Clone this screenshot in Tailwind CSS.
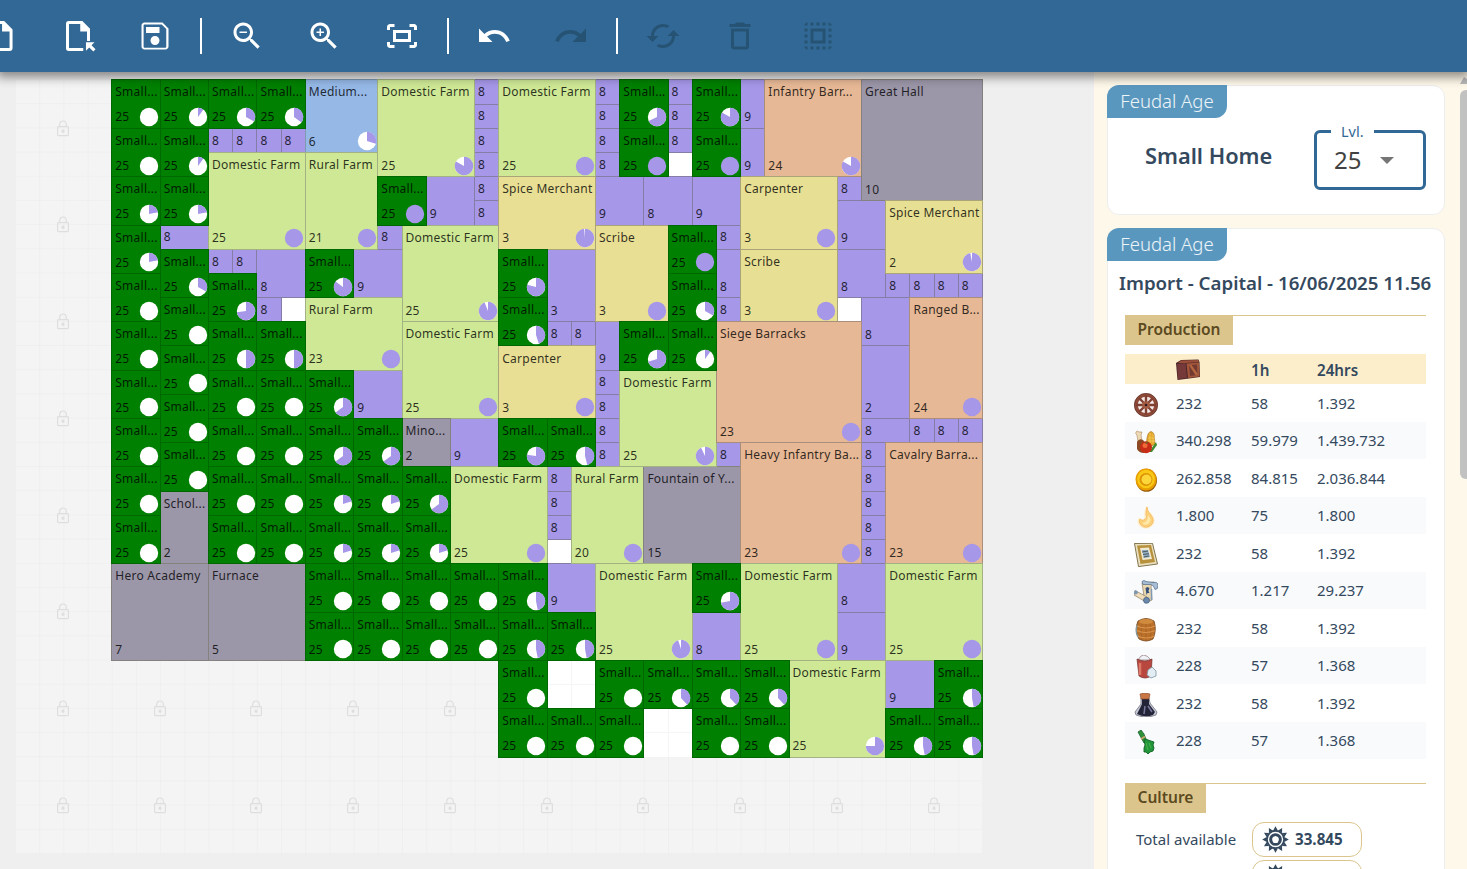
<!DOCTYPE html>
<html lang="en">
<head>
<meta charset="utf-8">
<title>City planner</title>
<script src="https://cdn.jsdelivr.net/npm/@tailwindcss/browser@4"></script>
</head>
<body class="h-[869px] w-[1467px] overflow-hidden bg-[#efefef] font-['Noto_Sans',sans-serif]">
<div class="flex h-[869px] flex-col overflow-hidden">
  <header class="relative z-10 flex h-[72px] shrink-0 items-center bg-[#326895] text-white shadow-[0_2px_10px_3px_rgba(0,0,0,0.45)]">
    <div class="-ml-[37.5px] flex items-center">
      <button class="flex w-[77px] justify-center"><svg class="size-9" viewBox="0 0 24 24"><path d="M5 3h10l5 5v12q0 1-1 1H5q-1 0-1-1V4q0-1 1-1Z" fill="none" stroke="currentColor" stroke-width="2" transform="translate(-1.300 0)"/><path d="M12.700 2.200h1l5.600 5.600V9h-6.600z" fill="currentColor"/></svg></button>
      <button class="flex w-[77px] justify-center"><svg class="size-9 overflow-visible" viewBox="0 0 24 24"><path d="M15.500 21H5.800q-.8 0-.8-.8V3.800Q5 3 5.800 3h8.700L19 7.500V15.300" fill="none" stroke="currentColor" stroke-width="2"/><path d="M13.500 2.300 19.800 8.600V9h-6.300zM17.300 16.200h5.700l-2 2 2.700 2.700-1.500 1.500-2.700-2.700-2.200 2.200z" fill="currentColor"/></svg></button>
      <button class="flex w-[77px] justify-center"><svg class="size-9" viewBox="0 0 24 24" fill="currentColor"><path fill-rule="evenodd" d="M17 3H5c-1.110 0-2 .9-2 2v14c0 1.100.89 2 2 2h14c1.100 0 2-.9 2-2V7l-4-4zm2.500 16.200a.6.600 0 0 1-.6.600H5a.6.600 0 0 1-.6-.6V4.900c0-.3.300-.6.600-.6h11.500l3 3v11.900zM12 12c-1.660 0-3 1.340-3 3s1.340 3 3 3 3-1.340 3-3-1.340-3-3-3zM6 6h9v4H6z"/></svg></button>
      <div class="flex w-[15px] justify-center"><i class="h-9 w-0.5 bg-white"></i></div>
      <button class="flex w-[77px] justify-center"><svg class="size-9" viewBox="0 0 24 24" fill="currentColor"><path d="M15.500 14h-.79l-.28-.27C15.410 12.590 16 11.110 16 9.500 16 5.910 13.090 3 9.500 3S3 5.910 3 9.500 5.910 16 9.500 16c1.610 0 3.090-.59 4.230-1.570l.27.28v.79l5 4.990L20.490 19l-4.990-5zm-6 0C7.010 14 5 11.990 5 9.500S7.010 5 9.500 5 14 7.010 14 9.500 11.990 14 9.500 14zM7 9h5v1H7z"/></svg></button>
      <button class="flex w-[77px] justify-center"><svg class="size-9" viewBox="0 0 24 24" fill="currentColor"><path d="M15.500 14h-.79l-.28-.27C15.410 12.590 16 11.110 16 9.500 16 5.910 13.090 3 9.500 3S3 5.910 3 9.500 5.910 16 9.500 16c1.610 0 3.090-.59 4.230-1.570l.27.28v.79l5 4.990L20.490 19l-4.990-5zm-6 0C7.010 14 5 11.990 5 9.500S7.010 5 9.500 5 14 7.010 14 9.500 11.990 14 9.500 14zM12 10h-2v2H9v-2H7V9h2V7h1v2h2v1z"/></svg></button>
      <button class="flex w-[77px] justify-center pl-0.5"><svg class="size-9" viewBox="0 0 24 24" fill="currentColor"><path d="M17 4h3c1.100 0 2 .9 2 2v2h-2V6h-3V4zM4 8V6h3V4H4c-1.100 0-2 .9-2 2v2h2zm16 8v2h-3v2h3c1.100 0 2-.9 2-2v-2h-2zM7 18H4v-2H2v2c0 1.100.9 2 2 2h3v-2zM16 10v4H8v-4h8m2-2H6v8h12V8z"/></svg></button>
      <div class="ml-px flex w-[15px] justify-center"><i class="h-9 w-0.5 bg-white"></i></div>
      <button class="flex w-[77px] justify-center"><svg class="size-9" viewBox="0 0 24 24" fill="currentColor"><path d="M12.500 8c-2.650 0-5.050.99-6.900 2.600L2 7v9h9l-3.620-3.620c1.390-1.160 3.160-1.880 5.120-1.880 3.540 0 6.550 2.310 7.600 5.500l2.370-.78C21.080 11.030 17.150 8 12.500 8z"/></svg></button>
      <button class="flex w-[77px] justify-center text-[#265373]"><svg class="size-9" viewBox="0 0 24 24" fill="currentColor"><path d="M18.400 10.600C16.550 8.990 14.150 8 11.500 8c-4.650 0-8.580 3.030-9.960 7.220L3.900 16c1.050-3.190 4.050-5.500 7.600-5.500 1.950 0 3.730.72 5.120 1.880L13 16h9V7l-3.600 3.600z"/></svg></button>
      <div class="flex w-[15px] justify-center"><i class="h-9 w-0.5 bg-white"></i></div>
      <button class="flex w-[77px] justify-center text-[#265373]"><svg class="size-9" viewBox="0 0 24 24" fill="currentColor"><path d="m19 8-4 4h3c0 3.310-2.690 6-6 6-1.010 0-1.970-.25-2.800-.7l-1.460 1.460C8.970 19.540 10.430 20 12 20c4.420 0 8-3.580 8-8h3l-4-4zM6 12c0-3.310 2.690-6 6-6 1.010 0 1.970.25 2.800.7l1.460-1.460C15.030 4.460 13.570 4 12 4c-4.420 0-8 3.580-8 8H1l4 4 4-4H6z"/></svg></button>
      <button class="flex w-[77px] justify-center text-[#265373]"><svg class="size-9" viewBox="0 0 24 24" fill="currentColor"><path d="M6 19c0 1.100.9 2 2 2h8c1.100 0 2-.9 2-2V7H6v12zM8 9h8v10H8V9zm7.500-5-1-1h-5l-1 1H5v2h14V4z"/></svg></button>
      <button class="flex w-[77px] justify-center pl-0.5 text-[#265373]"><svg class="size-9" viewBox="0 0 24 24" fill="currentColor"><path d="M3 5h2V3c-1.100 0-2 .9-2 2zm0 8h2v-2H3v2zm4 8h2v-2H7v2zM3 9h2V7H3v2zm10-6h-2v2h2V3zm6 0v2h2c0-1.100-.9-2-2-2zM5 21v-2H3c0 1.100.9 2 2 2zm-2-4h2v-2H3v2zM9 3H7v2h2V3zm2 18h2v-2h-2v2zm8-8h2v-2h-2v2zm0 8c1.100 0 2-.9 2-2h-2v2zm0-12h2V7h-2v2zm0 8h2v-2h-2v2zm-4 4h2v-2h-2v2zm0-16h2V3h-2v2zM7 17h10V7H7v10zm2-8h6v6H9V9z"/></svg></button>
    </div>
  </header>

  <div class="flex min-h-0 flex-1">
    <main class="w-[1094px] shrink-0 overflow-hidden pt-[7.400px] pl-[14.500px]">
      <div id="map" class="grid h-[774.200px] w-[967.600px] grid-cols-[repeat(40,24.190px)] grid-rows-[repeat(32,24.190px)] bg-[#f4f4f4] text-[12px] leading-[24px] text-black/80"></div>
    </main>

    <aside class="flex flex-1 overflow-hidden bg-[#fef8ea] pl-[13px]">
      <div class="flex w-[338px] flex-col gap-[13px] pt-[13px]">
        <section class="h-[130px] shrink-0 rounded-xl border border-[#eeeeee] bg-white">
          <div class="-mt-px -ml-px h-[33px] w-[120px] rounded-tl-xl rounded-br-xl bg-[#5a97be] text-center text-[18.500px] leading-[32px] font-light text-white/90">Feudal Age</div>
          <div class="flex items-center pl-[37px]">
            <h2 class="mt-[4px] w-[169px] text-[21.800px] font-semibold whitespace-nowrap text-[#34495e]">Small Home</h2>
            <fieldset class="mt-[5px] h-[67px] w-[112px] rounded-md border-3 border-[#326895] pl-[17px]">
              <legend class="-ml-[3px] px-2.5 text-[14.500px] leading-[16px] text-[#326895]">Lvl.</legend>
              <div class="flex items-center gap-[19px] pt-[6px] text-[24px] leading-[30px] text-[#424242]">25<i class="mt-px border-x-[7.500px] border-t-[7.500px] border-x-transparent border-t-[#757575]"></i></div>
            </fieldset>
          </div>
        </section>

        <section class="h-[700px] shrink-0 rounded-xl border border-[#eeeeee] bg-white text-[#34495e]">
          <div class="-mt-px -ml-px h-[33px] w-[120px] rounded-tl-xl rounded-br-xl bg-[#5a97be] text-center text-[18.500px] leading-[32px] font-light text-white/90">Feudal Age</div>
          <h2 class="mt-[8px] pl-[11px] text-[18.720px] leading-[28px] font-semibold whitespace-nowrap">Import - Capital - 16/06/2025 11.56</h2>
          <div class="mt-[18px] ml-[17px] w-[301px]">
            <div class="border-t border-[#dbc58d]"><h3 class="-mt-px flex h-[30px] w-[108px] items-center justify-center bg-[#dbc58d] text-[15.500px] font-semibold text-[#5c4a1f]">Production</h3></div>
            <div class="mt-[9px] grid h-[30px] grid-cols-[51px_75px_66px_1fr] items-center bg-[#fdeecb] text-[15.200px] leading-[32px] font-semibold">
              <span></span>
              <svg class="size-6" viewBox="0 0 24 24"><path d="M0 5 5 2l17.500-.5L23.500 4l.5 15-11 1.500L1.500 22z" fill="#4b2528"/><path d="M1 6 9.500 5l1.500 15-9 1z" fill="#75393a"/><path d="M2 5l3-2.500 17-.5 1 2-13 1z" fill="#9a4f3a"/><path d="M10.500 5.500 23 4.500l.5 14-11.500 1.500z" fill="#a2563a"/><path d="M13 7.300l8-.8.500 10.500-7.500 1z" fill="#733a32"/><path d="m13 7.300 2.500-.2 6 8.300v1.600l-1.800.3z" fill="#b5683f"/></svg>
              <span>1h</span><span>24hrs</span>
            </div>
            <div id="rows" class="text-[15px] leading-[37.500px]"></div>
            <div class="mt-[24px] border-t border-[#dbc58d]"><h3 class="-mt-px flex h-[30px] w-[81px] items-center justify-center bg-[#dbc58d] text-[15.500px] font-semibold text-[#5c4a1f]">Culture</h3></div>
            <div class="mt-[9px] grid grid-cols-[127px_110px] items-center gap-y-[3px] text-[15px]">
              <span class="pl-[11px] leading-[33px]">Total available</span>
              <div class="flex h-[35px] items-center gap-[6px] rounded-xl border border-[#dbc58d] pl-[9px] text-[15.200px] leading-[33px] font-bold"><svg class="gear size-[27px]" viewBox="-14 -14 28 28"></svg>33.845</div>
              <span></span>
              <div class="flex h-[35px] items-center gap-[6px] rounded-xl border border-[#dbc58d] pl-[9px]"><svg class="gear size-[27px]" viewBox="-14 -14 28 28"></svg></div>
            </div>
          </div>
        </section>
      </div>
      <div class="ml-auto flex w-[7px] flex-col pt-[4px]">
        <svg class="h-2 w-[7px]" viewBox="0 0 7 8"><path d="M0 8 4 1l3 2v5z" fill="#b9b9b9"/></svg>
        <div class="mt-[6px] h-[389px] rounded-l-md bg-[#c1c1c1]"></div>
      </div>
    </aside>
  </div>
</div>

<script>
const map = document.getElementById('map');
const LINE = 'rgba(0,0,0,0.02)';
map.style.backgroundImage = `linear-gradient(to right, ${LINE} 1px, transparent 1px), linear-gradient(to bottom, ${LINE} 1px, transparent 1px)`;
map.style.backgroundSize = '24.19px 24.19px';

// Each cell is placed with its grid column, row, width and height.
function cell(x, y, w, h, cls, html) {
  const d = document.createElement('div');
  d.className = cls;
  d.style.gridArea = `${y + 1} / ${x + 5} / span ${h} / span ${w}`;
  d.innerHTML = html || '';
  map.appendChild(d);
}

const LOCK = '<svg class="mt-[0.500px] h-[17px] w-[14px] text-[#dedede]" viewBox="0 0 14 17" fill="none" stroke="currentColor" stroke-width="1.200"><rect x="1.600" y="6.600" width="10.800" height="9" rx=".8"/><path d="M3.700 6.500V4.300a3.300 3.300 0 0 1 6.600 0v2.200"/><circle cx="7" cy="11.200" r="1" fill="currentColor"/></svg>';
const locks = [];
for (let i = 0; i < 8; i++) locks.push([-4, i * 4]);
for (let i = 0; i < 4; i++) locks.push([i * 4, 24]);
for (let i = 0; i < 9; i++) locks.push([i * 4, 28]);
for (const [x, y] of locks) cell(x, y, 4, 4, 'flex items-center justify-center', LOCK);

// Free, unlocked tiles
for (const [x, y, s] of [[7,9,1],[23,3,1],[30,9,1],[18,19,1],[18,24,2],[22,26,2]])
  for (let i = 0; i < s; i++) for (let j = 0; j < s; j++)
    cell(x + i, y + j, 1, 1, 'border-t border-l border-[#f5f5f5] bg-white');

function pie(p) {
  let slice = '';
  if (p > 0 && p < 1) {
    const a = p * 2 * Math.PI;
    slice = `<path fill="#a697e8" d="M0 0V-9.200A9.200 9.200 0 ${p > .5 ? 1 : 0} 1 ${(9.2 * Math.sin(a)).toFixed(2)} ${(-9.2 * Math.cos(a)).toFixed(2)}Z"/>`;
  }
  return `<svg class="mr-[0.500px] mb-[0.500px] size-5 shrink-0" viewBox="-10 -10 20 20"><circle r="9.200" fill="${p >= 1 ? '#a697e8' : '#fff'}"/>${slice}</svg>`;
}

const BASE = '-mr-px -mb-px flex flex-col justify-between overflow-hidden border pl-[3px] whitespace-nowrap ';
const STYLES = {
  home: BASE + 'border-[#006800] bg-[#008000]',
  culture: BASE + 'border-[#857da5] bg-[#a697e8]',
  farm: BASE + 'border-[#a2b283] bg-[#cee895]',
  work: BASE + 'border-[#aaa578] bg-[#e7df93]',
  spice: BASE + 'border-[#aaa578] bg-[#e8de94]',
  army: BASE + 'border-[#a98f7b] bg-[#e7b895]',
  grey: BASE + 'border-[#85817f] bg-[#9b96a8]',
  blue: BASE + 'border-[#7f99b3] bg-[#95b8e7]'
};

function building(type, x, y, w, h, level, name, p) {
  const label = name ? `<span class="h-6 pt-[0.100px] tracking-[0.250px]">${name}</span>` : '<span></span>';
  const foot = `<div class="-mb-[1.700px] flex h-6 items-center justify-between"><span class="tracking-[0.200px]">${level}</span>${p === undefined ? '' : pie(p)}</div>`;
  cell(x, y, w, h, STYLES[type], h === 1 ? `<span class="-mt-[0.200px] tracking-[0.200px]">${level}</span>` : label + foot);
}

// Culture sites: column, row, width, height, level
[[2,6,2,1,8],[4,2,1,1,8],[5,2,1,1,8],[6,2,1,1,8],[7,2,1,1,8],[4,7,1,1,8],[5,7,1,1,8],[6,7,2,2,8],[6,9,1,1,8],
[10,7,2,2,9],[10,12,2,2,9],[13,4,2,2,9],[15,0,1,1,8],[15,1,1,1,8],[15,2,1,1,8],[15,3,1,1,8],[15,4,1,1,8],[15,5,1,1,8],
[11,6,1,1,8],[14,14,2,2,9],[18,7,2,3,3],[18,10,1,1,8],[19,10,1,1,8],[18,16,1,1,8],[18,17,1,1,8],[18,18,1,1,8],
[20,0,1,1,8],[20,1,1,1,8],[20,2,1,1,8],[20,3,1,1,8],[20,4,2,2,9],[22,4,2,2,8],[24,4,2,2,9],[20,10,1,2,9],
[20,12,1,1,8],[20,13,1,1,8],[20,14,1,1,8],[20,15,1,1,8],[23,0,1,1,8],[23,1,1,1,8],[23,2,1,1,8],[26,0,1,2,9],[26,2,1,2,9],
[25,6,1,1,8],[25,7,1,2,8],[25,9,1,1,8],[30,4,1,1,8],[30,5,2,2,9],[30,7,2,2,8],[32,8,1,1,8],[33,8,1,1,8],[34,8,1,1,8],[35,8,1,1,8],
[31,9,2,2,8],[31,11,2,3,2],[31,14,2,1,8],[33,14,1,1,8],[34,14,1,1,8],[35,14,1,1,8],[25,15,1,1,8],
[31,15,1,1,8],[31,16,1,1,8],[31,17,1,1,8],[31,18,1,1,8],[31,19,1,1,8],
[18,20,2,2,9],[24,22,2,2,8],[30,20,2,2,8],[30,22,2,2,9],[32,24,2,2,9]
].forEach(c => building('culture', ...c));

[['blue',8,0,3,3,6,'Medium...',.3],
['farm',4,3,4,4,25,'Domestic Farm',1],['farm',8,3,3,4,21,'Rural Farm',1],['farm',8,9,4,3,23,'Rural Farm',1],
['farm',11,0,4,4,25,'Domestic Farm',.83],['farm',12,6,4,4,25,'Domestic Farm',.94],['farm',12,10,4,4,25,'Domestic Farm',1],
['grey',12,14,2,2,2,'Mino...'],['farm',14,16,4,4,25,'Domestic Farm',1],['farm',16,0,4,4,25,'Domestic Farm',1],
['spice',16,4,4,3,3,'Spice Merchant',.985],['spice',16,11,4,3,3,'Carpenter',1],['farm',19,16,3,4,20,'Rural Farm',1],
['grey',22,16,4,4,15,'Fountain of Y...'],['spice',20,6,3,4,3,'Scribe',1],['army',27,0,4,4,24,'Infantry Barr...',.83],
['grey',31,0,5,5,10,'Great Hall'],['work',26,4,4,3,3,'Carpenter',1],['work',26,7,4,3,3,'Scribe',1],
['work',32,5,4,3,2,'Spice Merchant',.97],['army',33,9,3,5,24,'Ranged B...',1],['farm',21,12,4,4,25,'Domestic Farm',.93],
['army',25,10,6,5,23,'Siege Barracks',1],['army',26,15,5,5,23,'Heavy Infantry Ba...',1],['army',32,15,4,5,23,'Cavalry Barra...',1],
['grey',2,17,2,3,2,'Schol...'],['grey',0,20,4,4,7,'Hero Academy'],['grey',4,20,4,4,5,'Furnace'],
['farm',20,20,4,4,25,'Domestic Farm',.95],['farm',26,20,4,4,25,'Domestic Farm',1],['farm',32,20,4,4,25,'Domestic Farm',1],
['farm',28,24,4,4,25,'Domestic Farm',.75]
].forEach(b => building(...b));

// Small homes: column, row, filled share of the indicator
[[0,0,0],[0,2,0],[0,4,.22],[0,6,.22],[0,8,0],[0,10,0],[0,12,0],[0,14,0],[0,16,0],[0,18,0],
[2,0,.1],[2,2,.1],[2,4,.22],[2,7,.33],[2,9,0],[2,11,0],[2,13,0],[2,15,0],
[4,0,.33],[6,0,.35],[4,8,.73],[4,10,.5],[6,10,.5],[4,12,0],[6,12,0],[4,14,0],[6,14,0],[4,16,0],[6,16,0],[4,18,0],[6,18,0],
[8,7,.85],[8,12,.65],[8,14,.65],[10,14,.65],[8,16,.2],[10,16,.2],[12,16,.65],[8,18,.2],[10,18,.2],[12,18,.2],
[11,4,1],[16,7,.79],[16,9,.45],[16,14,.77],[18,14,.46],[21,0,.68],[21,2,1],[24,0,.83],[24,2,1],[23,6,1],[23,8,.33],[21,10,.7],[23,10,.1],
[8,20,0],[10,20,0],[12,20,0],[14,20,0],[16,20,.47],[8,22,0],[10,22,0],[12,22,0],[14,22,0],[16,22,.47],[18,22,.47],[24,20,.72],
[16,24,0],[20,24,0],[22,24,.38],[24,24,.38],[26,24,.38],[34,24,.47],[16,26,0],[18,26,0],[20,26,0],[24,26,0],[26,26,0],[32,26,.47],[34,26,.47]
].forEach(([x, y, p]) => building('home', x, y, 2, 2, 25, 'Small...', p));

const ICONS = {
  wheel: '<circle cx="12" cy="12" r="10" fill="#f3e9e6" stroke="#8f4b38" stroke-width="3.600"/><circle cx="12" cy="12" r="11.600" fill="none" stroke="#5a302a" stroke-width=".7"/><path d="M12 2v20M2 12h20M5 5l14 14M19 5 5 19" stroke="#7f4033" stroke-width="2.400"/><circle cx="12" cy="12" r="3.800" fill="#a35a40"/><circle cx="12" cy="12" r="1.300" fill="#2f1d22"/>',
  food: '<path d="M2 2q1-2 3 0l3 0-1 3 1 6-4 1-1-7q-2-1-1-3z" fill="#eed9b5" stroke="#a98459" stroke-width=".6"/><path d="M3 12q2-4 6-2l4 5-3 8q-5 0-7-4z" fill="#8b4a24"/><path d="M14 4q3-5 6 0l1 10-6 4q-4-5-1-14z" fill="#e3a82c" stroke="#a8741c" stroke-width=".6"/><path d="M16 3v10M19 4v9M14 8h7M14 11h7" stroke="#f8d569" stroke-width=".6"/><path d="m22 12 1 3-5 7-3 0z" fill="#3f8b2d"/><circle cx="12" cy="17.300" r="6" fill="#c82d17"/><circle cx="11" cy="15.500" r="2.500" fill="#ef6a36"/><path d="m9 12 3 1 2-2-1 3-2-1z" fill="#437a2a"/>',
  coin: '<ellipse cx="12.500" cy="12.300" rx="10.500" ry="11.500" fill="#9a5c0c"/><ellipse cx="12" cy="11.500" rx="10.500" ry="11" fill="#e89d00"/><ellipse cx="12" cy="11" rx="8.800" ry="9.300" fill="#f9c916"/><circle cx="12" cy="11.500" r="6.500" fill="#dc9206"/><circle cx="12.500" cy="11.500" r="5" fill="#fdd73a"/>',
  flame: '<path d="M13 0q-1 5 5 9 6 8-1 13-6 4-12-1-3-5 0-9 1 2 3 3 3-1 2-5 0-6 3-10z" fill="#fff0d0"/><path d="M13 2q0 4 4 8 5 7-1 11-5 3-9-1-3-3-1-6 2 2 4 1 4-2 2-6 0-4 1-7z" fill="#fbd07a" stroke="#f6b85f" stroke-width=".8"/><path d="M14 10q5 6 0 9-4 2-6-1 6 0 6-8z" fill="#ffe9a8"/>',
  frame: '<path d="m.5.500 18-.2L23.500 21l-19 2.600z" fill="#e9dfbd" stroke="#766640" stroke-width=".9"/><path d="M3 2.500 17 2l4 17-14.500 2z" fill="#b8913d"/><path d="m6 5 9-.4 3 11.500-9.500 1z" fill="#efe9d1"/><path d="M8 7h6l2 7-6 1z" fill="#90abc2"/><path d="m8 9 6-1M9 11.500l6-.8M9.500 14l5.500-1" stroke="#4c5b60" stroke-width="1"/>',
  scroll: '<path d="m8 3 12-1-3 4 1 14-7 3z" fill="#e9d7b0" stroke="#8d7a61" stroke-width=".7"/><path d="m11.500 8 2-1 2 1-1 3 1 2h-2l-1 2z" fill="#354f78"/><path d="M1 10.500 13 17l-1 5L0 15z" fill="#efddba" stroke="#8d7a61" stroke-width=".7"/><path d="M8 1.500q2-2 4 0l7 1q5-1 5 3 0 4-3 4-1-4-4-5l-8 0z" fill="#a6bdd4" stroke="#50698a" stroke-width=".7"/><circle cx="1.800" cy="12.500" r="2" fill="#7e96b2"/><circle cx="12.500" cy="20.300" r="3" fill="#6b89ad" stroke="#3e5878" stroke-width=".7"/><path d="M17.500 9v11" stroke="#8098b4" stroke-width="1.500"/>',
  barrel: '<path d="M4 3q8-5 16 0 3 9-1 18-7 4-14 0Q0 12 4 3z" fill="#bb712a" stroke="#73411b" stroke-width=".8"/><ellipse cx="12" cy="3.600" rx="7" ry="2.500" fill="#d08b3f"/><path d="M8 6q-2 8 0 16M12 6v17M16 6q2 8 0 16" fill="none" stroke="#9a5a24" stroke-width=".6"/><path d="M3 8q9 4 18 0M2.500 12.500q9 4 19 0M3.500 18q9 4 17 0" fill="none" stroke="#d9964f" stroke-width="1.100"/><path d="M3 7q-2 7 1 12" fill="none" stroke="#87999d" stroke-width="1.300"/>',
  sack: '<path d="M4 5Q9-5 17 5z" fill="#f0f2f6" stroke="#8b7379" stroke-width=".7"/><path d="M3 4q8 4 15 0l-1 17q-6 4-12 0z" fill="#b8473f" stroke="#742e2c" stroke-width=".7"/><path d="M6 8v12" stroke="#dc7968" stroke-width="2.500"/><path d="m14 15 4-3 4 4v5l-5 2-4-3z" fill="#e2eef4" stroke="#7d949f" stroke-width=".8"/>',
  flask: '<path d="M7 5h8l1 5 7 9-1 3q-10 4-20 0l-1-3 6-8z" fill="#c6c9d5" stroke="#747682" stroke-width=".8"/><path d="M8 6h7v5l6 8-2 3q-8 3-16-1l5-10z" fill="#242438"/><path d="M6 1q5-2 10 0l-1 5H7z" fill="#c97845" stroke="#83472b" stroke-width=".6"/><path d="m11 13-1 8M14 13l4 6" stroke="#77789b" stroke-width="1.500"/>',
  herb: '<path d="m4 2 3-2 3 4 3 8-3 1z" fill="#2f913a" stroke="#17602a" stroke-width=".8"/><path d="M10 10q2-2 4 0l3 1 3 1-1 3 1 3-1 3-3 1-2 2-2-2-2 0 0-4 1-3z" fill="#22963a" stroke="#126226" stroke-width=".9"/><path d="m7 9 4-2.500" stroke="#c9a36a" stroke-width="2"/><path d="m12 13 2 7M15 13l2 5" stroke="#4fb84e" stroke-width=".9"/>'
};
document.getElementById('rows').innerHTML = [
  ['wheel','232','58','1.392'],['food','340.298','59.979','1.439.732'],['coin','262.858','84.815','2.036.844'],
  ['flame','1.800','75','1.800'],['frame','232','58','1.392'],['scroll','4.670','1.217','29.237'],
  ['barrel','232','58','1.392'],['sack','228','57','1.368'],['flask','232','58','1.392'],['herb','228','57','1.368']
].map(([icon, ...v]) => `<div class="grid h-[37.500px] grid-cols-[51px_75px_66px_1fr] items-center even:bg-[#f8fafc]"><svg class="mt-[3px] ml-[9px] size-6" viewBox="0 0 24 24">${ICONS[icon]}</svg>${v.map(t => `<span class="pt-[0.500px]">${t}</span>`).join('')}</div>`).join('');

let teeth = '';
for (let i = 0; i < 12; i++) teeth += `<path transform="rotate(${i * 30})" d="M-2.300 -9.500 0 -13.800 2.300 -9.500z"/>`;
document.querySelectorAll('.gear').forEach(g => g.innerHTML = `<g fill="#34495e">${teeth}<circle r="9" fill="none" stroke="#34495e" stroke-width="2"/><circle r="5" fill="none" stroke="#34495e" stroke-width="3.200"/><path d="m0-3.600 3.600 3.300H2.200V3.500h-4.400V-.3h-1.400z" fill="#fff"/></g>`);
</script>
</body>
</html>
